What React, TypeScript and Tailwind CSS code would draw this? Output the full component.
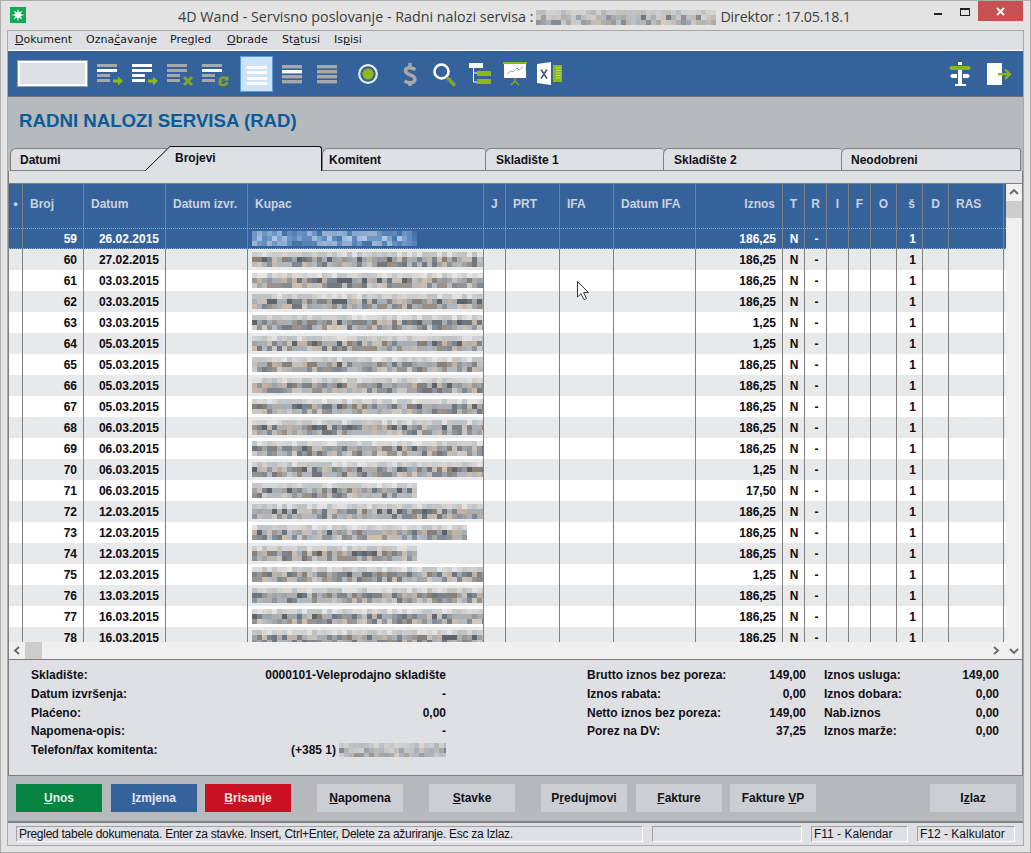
import type { ReactNode } from 'react';

const SANS = 'font-["Liberation_Sans",Arial,sans-serif]';
const UI = 'font-["DejaVu_Sans",sans-serif]';

const GREEN = '#8cb818';
const DIM = '#84a42a';
const GREY = '#a8a8a8';

// small seeded generator so the blurred blocks stay the same on every run
function rng(seed: number) {
  let s = seed * 9301 + 49297;
  return () => {
    s = (s * 9301 + 49297) % 233280;
    return s / 233280;
  };
}

const warm = ['#c4b2a2', '#7f858c', '#989898', '#5f646b', '#a6aeb6', '#c6c0ba', '#8a8076', '#6c7784', '#aeaeae', '#9ea4a8'];
const light = ['#b8babd', '#cccccc', '#b2b8bc', '#d4d0cc', '#c4c4c4', '#dedede'];
const blue = ['#6f97c4', '#9dbcdc', '#4a78ac', '#acc6e0', '#5f8abb', '#7ba2cc'];

function Mosaic({ seed, width, selected }: { seed: number; width: number; selected?: boolean }) {
  const r = rng(seed);
  const cols = Math.ceil(width / 5);
  const rects: ReactNode[] = [];
  for (let c = 0; c < cols; c++) {
    for (let l = 0; l < 3; l++) {
      const pal = selected ? blue : l === 0 ? light : warm;
      const fill = pal[Math.floor(r() * pal.length)];
      const op = l === 0 ? 0.8 : l === 1 ? 1 : 0.85;
      rects.push(<rect key={c + '-' + l} x={c * 5} y={l * 5} width={5} height={5} fill={fill} opacity={op} />);
    }
  }
  return (
    <svg width={width} height={15} className="block">
      {rects}
    </svg>
  );
}

function BlurBlock({ seed, width, height }: { seed: number; width: number; height: number }) {
  const r = rng(seed);
  const rects: ReactNode[] = [];
  for (let c = 0; c < Math.ceil(width / 5); c++) {
    for (let l = 0; l < Math.ceil(height / 5); l++) {
      const g = warm[Math.floor(r() * warm.length)];
      rects.push(<rect key={c + '-' + l} x={c * 5} y={l * 5} width={5} height={5} fill={g} opacity={l === 0 ? 0.35 : 0.4 + r() * 0.5} />);
    }
  }
  return (
    <svg width={width} height={height} className="block shrink-0">
      {rects}
    </svg>
  );
}

// toolbar icons use page coordinates in the viewBox (y 52..96)
function Ico({ x, w, ml, children }: { x: number; w: number; ml: string; children: ReactNode }) {
  return (
    <svg width={w} height={44} viewBox={`${x} 52 ${w} 44`} className={`block shrink-0 mt-[1px] ${ml}`}>
      {children}
    </svg>
  );
}

function Lines({ x, c }: { x: number; c: string[] }) {
  return (
    <>
      <rect x={x} y={64} width={20} height={3} fill={c[0]} />
      <rect x={x} y={69} width={20} height={3} fill={c[1]} />
      <rect x={x} y={74} width={13} height={3} fill={c[2]} />
      <rect x={x} y={79} width={13} height={3} fill={c[3]} />
    </>
  );
}

function Bars({ x, c }: { x: number; c: string[] }) {
  return (
    <>
      {c.map((col, i) => (
        <rect key={i} x={x} y={65 + i * 5} width={20} height={3.4} fill={col} />
      ))}
    </>
  );
}

function Toolbar() {
  const arrow = (x: number) => <path d={`M${x} 79.5h5v-3l5 4.5-5 4.5v-3h-5z`} fill={GREEN} />;
  return (
    <div className="flex h-[47px] items-start border-t border-b border-t-white border-b-[#6f7479] bg-[#36629b] pl-[10px] pr-[11px]">
      <div className="mt-[10px] h-[25px] w-[69px] shrink-0 border-2 border-white bg-[#dfe0e3] outline outline-1 outline-[#9aa0a8]" />
      <Ico x={97} w={26} ml="ml-[10px]">
        <Lines x={97} c={[GREY, '#ffffff', GREY, GREY]} />
        {arrow(113)}
      </Ico>
      <Ico x={132} w={26} ml="ml-[9px]">
        <Lines x={132} c={['#ffffff', '#ffffff', '#ffffff', '#ffffff']} />
        {arrow(148)}
      </Ico>
      <Ico x={167} w={26} ml="ml-[9px]">
        <Lines x={167} c={[GREY, GREY, GREY, GREY]} />
        <path d="M184 77l8 8M192 77l-8 8" stroke={DIM} strokeWidth={3} fill="none" />
      </Ico>
      <Ico x={202} w={27} ml="ml-[9px]">
        <Lines x={202} c={[GREY, '#ffffff', GREY, GREY]} />
        <path d="M219.5 80.5a4.5 4.5 0 0 1 7.5-1.8M227.5 82a4.5 4.5 0 0 1-7.5 1.8" stroke={DIM} strokeWidth={2.4} fill="none" />
        <path d="M228.5 75.5v5h-5zM218.5 85.5v-5h5z" fill={DIM} />
      </Ico>
      <div className="ml-[11px] mt-[5px] flex h-[36px] w-[33px] shrink-0 flex-col items-center gap-[2.4px] border border-[#5a9be0] bg-[#cde3fb] pt-[9px]">
        <div className="h-[3px] w-[20px] bg-white" />
        <div className="h-[3px] w-[20px] bg-white" />
        <div className="h-[3px] w-[20px] bg-white" />
        <div className="h-[3px] w-[20px] bg-white" />
      </div>
      <Ico x={282} w={20} ml="ml-[9px]">
        <Bars x={282} c={[GREY, '#ffffff', GREY, GREY]} />
      </Ico>
      <Ico x={317} w={20} ml="ml-[15px]">
        <Bars x={317} c={[GREY, GREY, GREY, GREY]} />
      </Ico>
      <Ico x={356} w={24} ml="ml-[19px]">
        <circle cx={368} cy={74} r={8.8} fill="none" stroke="#e8e8e8" strokeWidth={2.2} />
        <circle cx={368} cy={74} r={5.6} fill={GREEN} />
      </Ico>
      <Ico x={402} w={16} ml="ml-[22px]">
        <path
          d="M415.5 69.5Q410 66.5 406.5 68.5Q403.8 71.5 408 73.8L413 76.2Q416.5 79 413.8 81.8Q410 84 404.5 81"
          fill="none"
          stroke={GREY}
          strokeWidth={3.6}
        />
        <path d="M410 63v4M410 82v4" stroke={GREY} strokeWidth={3.4} />
      </Ico>
      <Ico x={430} w={27} ml="ml-[12px]">
        <circle cx={441.5} cy={71.5} r={7} fill="none" stroke="#ffffff" strokeWidth={2.6} />
        <path d="M448 78.5l6 6" stroke={DIM} strokeWidth={3.6} strokeLinecap="round" />
      </Ico>
      <Ico x={469} w={23} ml="ml-[12px]">
        <rect x={469} y={63} width={14} height={5} fill="#ffffff" />
        <path d="M473.5 68v14M473.5 73h4M473.5 82h4" stroke="#ffffff" strokeWidth={1} fill="none" />
        <rect x={477} y={71} width={14} height={5} fill={GREEN} />
        <rect x={477} y={79} width={14} height={5} fill={GREEN} />
      </Ico>
      <Ico x={503} w={25} ml="ml-[11px]">
        <rect x={503} y={62} width={24} height={2} fill={GREEN} />
        <rect x={504} y={64} width={22} height={14} fill="#ffffff" />
        <path d="M507 74l4-3 2 1 4-4 2 2 4-3" fill="none" stroke="#a0a0a0" strokeWidth={0.9} />
        <path d="M515 78v3l-4 4M515 81l4 4" stroke={DIM} strokeWidth={1.6} fill="none" />
      </Ico>
      <Ico x={537} w={26} ml="ml-[9px]">
        <path d="M537 64l14-2v23l-14-2z" fill="#ffffff" />
        <path d="M541 69.5l6 9M547 69.5l-6 9" stroke="#4f5f78" strokeWidth={1.7} />
        <rect x={553} y={65} width={9} height={17} fill={GREEN} />
        <path d="M556 68h5M556 70.500h5M556 73h5M556 75.500h5M556 78h5" stroke="#cfe08c" strokeWidth={0.8} />
      </Ico>
      <Ico x={949} w={23} ml="ml-auto">
        <rect x={958} y={62} width={4} height={3} fill="#ffffff" />
        <path d="M949 68l2-2h18l2 2-2 2h-18z" fill={GREEN} />
        <rect x={958} y={70} width={4} height={15} fill="#ffffff" />
        <path d="M950 76l2-2h5v4h-5zM970 76l-2-2h-5v4h5z" fill="#ffffff" />
        <rect x={955} y={84} width={11} height={2} fill="#ffffff" />
      </Ico>
      <Ico x={987} w={25} ml="ml-[15px]">
        <rect x={987} y={63} width={15} height={22} fill="#ffffff" />
        <rect x={998} y={73} width={11} height={2.4} fill={GREEN} />
        <path d="M1005 69.500l5 4.700-5 4.700" fill="none" stroke={GREEN} strokeWidth={2.2} />
      </Ico>
    </div>
  );
}

function Tab({ label, cls }: { label: string; cls: string }) {
  return (
    <div className={`mt-[2px] flex h-[23px] shrink-0 items-center rounded-tl-[6px] rounded-tr-[3px] border-t border-l border-b border-[#808080] bg-[#dfe0e3] text-xs font-bold text-[#101018] ${cls}`}>
      {label}
    </div>
  );
}

function Tabs() {
  return (
    <div className={`flex h-[25px] items-start pl-[2px] ${SANS}`}>
      <div className="mt-[2px] flex h-[23px] w-[135px] shrink-0 items-center rounded-tl-[6px] border-t border-l border-b border-[#808080] bg-[#dfe0e3] pl-[9px] text-xs font-bold text-[#101018]">
        Datumi
      </div>
      <svg width={25} height={25} viewBox="0 0 25 25" className="block shrink-0">
        <path d="M0 2.500H22L0 24z" fill="#dfe0e3" />
        <path d="M0 2.500H22" stroke="#808080" fill="none" />
        <path d="M0 25L25 0.500V25z" fill="#dfe0e3" />
        <path d="M0 25L25 0.500" stroke="#101010" fill="none" />
      </svg>
      <div className="flex h-[25px] w-[152px] shrink-0 items-start rounded-tr-[3px] border-t border-r border-[#101010] bg-[#dfe0e3] pl-[5px] pt-[4px] text-xs font-bold leading-[15px] text-[#101018]">
        Brojevi
      </div>
      <Tab label="Komitent" cls="w-[163px] pl-[6px]" />
      <Tab label="Skladište 1" cls="w-[178px] pl-[10px]" />
      <Tab label="Skladište 2" cls="w-[178px] pl-[10px]" />
      <Tab label="Neodobreni" cls="w-[180px] border-r pl-[9px]" />
    </div>
  );
}

const headers: { label: string; w: string; cls: string }[] = [
  { label: '•', w: 'w-[14px]', cls: 'justify-center' },
  { label: 'Broj', w: 'w-[61px]', cls: 'pl-[7px]' },
  { label: 'Datum', w: 'w-[82px]', cls: 'pl-[7px]' },
  { label: 'Datum izvr.', w: 'w-[82px]', cls: 'pl-[7px]' },
  { label: 'Kupac', w: 'w-[236px]', cls: 'pl-[7px]' },
  { label: 'J', w: 'w-[22px]', cls: 'pl-[7px]' },
  { label: 'PRT', w: 'w-[54px]', cls: 'pl-[7px]' },
  { label: 'IFA', w: 'w-[54px]', cls: 'pl-[7px]' },
  { label: 'Datum IFA', w: 'w-[82px]', cls: 'pl-[7px]' },
  { label: 'Iznos', w: 'w-[87px]', cls: 'justify-end pr-[7px]' },
  { label: 'T', w: 'w-[22px]', cls: 'justify-center' },
  { label: 'R', w: 'w-[22px]', cls: 'justify-center' },
  { label: 'I', w: 'w-[22px]', cls: 'justify-center' },
  { label: 'F', w: 'w-[22px]', cls: 'justify-center' },
  { label: 'O', w: 'w-[26px]', cls: 'justify-center' },
  { label: 'š', w: 'w-[26px]', cls: 'justify-center pl-[4px]' },
  { label: 'D', w: 'w-[26px]', cls: 'justify-center' },
  { label: 'RAS', w: 'w-[55px]', cls: 'pl-[7px]' },
];

const rows: [number, string, string, number][] = [
  [59, '26.02.2015', '186,25', 165],
  [60, '27.02.2015', '186,25', 231],
  [61, '03.03.2015', '186,25', 231],
  [62, '03.03.2015', '186,25', 231],
  [63, '03.03.2015', '1,25', 231],
  [64, '05.03.2015', '1,25', 231],
  [65, '05.03.2015', '186,25', 231],
  [66, '05.03.2015', '186,25', 231],
  [67, '05.03.2015', '186,25', 231],
  [68, '06.03.2015', '186,25', 231],
  [69, '06.03.2015', '186,25', 231],
  [70, '06.03.2015', '1,25', 231],
  [71, '06.03.2015', '17,50', 165],
  [72, '12.03.2015', '186,25', 231],
  [73, '12.03.2015', '186,25', 215],
  [74, '12.03.2015', '186,25', 165],
  [75, '12.03.2015', '1,25', 231],
  [76, '13.03.2015', '186,25', 231],
  [77, '16.03.2015', '186,25', 231],
  [78, '16.03.2015', '186,25', 231],
];

const line = 'h-full shrink-0 border-r border-[#808080]';

function Row({ no, date, amount, blur }: { no: number; date: string; amount: string; blur: number }) {
  const selected = no === 59;
  const bg = selected
    ? 'bg-[#36629b] text-white border-y border-dotted border-[#e0a050]'
    : no % 2 === 0
      ? 'bg-[#e8e9eb] text-[#0a0a10]'
      : 'bg-white text-[#0a0a10]';
  return (
    <div className={`flex h-[21px] items-center text-xs font-bold ${bg}`}>
      <div className={`${line} w-[14px]`} />
      <div className={`${line} flex w-[61px] items-center justify-end pr-[6px]`}>{no}</div>
      <div className={`${line} flex w-[82px] items-center justify-end pr-[6px]`}>{date}</div>
      <div className={`${line} w-[82px]`} />
      <div className={`${line} flex w-[236px] items-center pl-[4px]`}>
        <Mosaic seed={no * 7} width={blur} selected={selected} />
      </div>
      <div className={`${line} w-[22px]`} />
      <div className={`${line} w-[54px]`} />
      <div className={`${line} w-[54px]`} />
      <div className={`${line} w-[82px]`} />
      <div className={`${line} flex w-[87px] items-center justify-end pr-[6px]`}>{amount}</div>
      <div className={`${line} flex w-[22px] items-center justify-center pl-[1px]`}>N</div>
      <div className={`${line} flex w-[22px] items-center justify-center pl-[2px]`}>-</div>
      <div className={`${line} w-[22px]`} />
      <div className={`${line} w-[22px]`} />
      <div className={`${line} w-[26px]`} />
      <div className={`${line} flex w-[26px] items-center justify-center pl-[6px]`}>1</div>
      <div className={`${line} w-[26px]`} />
      <div className={`${line} w-[55px]`} />
    </div>
  );
}

function Chevron({ d }: { d: string }) {
  return (
    <svg width={16} height={17} viewBox="0 0 16 17" className="block shrink-0">
      <path d={d} fill="none" stroke="#666666" strokeWidth={1.8} />
    </svg>
  );
}

function Table() {
  return (
    <div className={`flex border-t border-[#808080] ${SANS}`}>
      <div className="w-[997px] shrink-0">
        <div className="flex h-[44px] bg-[#36629b] text-xs font-bold text-[#ccd2dc]">
          {headers.map((h) => (
            <div key={h.label} className={`flex shrink-0 items-center border-r border-[#808080] pb-[5px] ${h.w} ${h.cls}`}>
              {h.label}
            </div>
          ))}
        </div>
        <div className="relative h-[414px] overflow-hidden">
          {rows.map(([no, date, amount, blur]) => (
            <Row key={no} no={no} date={date} amount={amount} blur={blur} />
          ))}
          <svg width={14} height={20} viewBox="0 0 14 20" className="absolute left-[568px] top-[53px]">
            <path d="M.5.500V16L4 12.700 7 18.700 9.500 17.500 6.600 11.500H11.500Z" fill="#ffffff" stroke="#202020" strokeWidth={0.9} />
          </svg>
        </div>
        <div className="flex h-[17px] items-center bg-[#f0f0f0]">
          <Chevron d="M10 5l-4 3.500 4 3.500" />
          <div className="h-[17px] w-[17px] bg-[#cdcdcd]" />
          <div className="ml-auto">
            <Chevron d="M4 5l4 3.500-4 3.500" />
          </div>
        </div>
      </div>
      <div className="flex w-[16px] shrink-0 flex-col bg-[#f0f0f0]">
        <Chevron d="M4 10l4-4 4 4" />
        <div className="h-[17px] w-full bg-[#cdcdcd]" />
        <div className="mt-auto">
          <Chevron d="M4 7l4 4 4-4" />
        </div>
      </div>
    </div>
  );
}

const detailLeft: [string, ReactNode][] = [
  ['Skladište:', '0000101-Veleprodajno skladište'],
  ['Datum izvršenja:', '-'],
  ['Plaćeno:', '0,00'],
  ['Napomena-opis:', '-'],
  [
    'Telefon/fax komitenta:',
    <span key="tel" className="flex items-center gap-[3px]">
      (+385 1)
      <BlurBlock seed={33} width={107} height={14} />
    </span>,
  ],
];
const detailMid = [
  ['Brutto iznos bez poreza:', '149,00'],
  ['Iznos rabata:', '0,00'],
  ['Netto iznos bez poreza:', '149,00'],
  ['Porez na DV:', '37,25'],
];
const detailRight = [
  ['Iznos usluga:', '149,00'],
  ['Iznos dobara:', '0,00'],
  ['Nab.iznos', '0,00'],
  ['Iznos marže:', '0,00'],
];

function DetailCol({ items, w, ml }: { items: (string | ReactNode)[][]; w: string; ml: string }) {
  return (
    <div className={`shrink-0 ${w} ${ml}`}>
      {items.map((it, i) => (
        <div key={i} className="flex h-[18.700px] items-center justify-between">
          <span>{it[0]}</span>
          <span>{it[1]}</span>
        </div>
      ))}
    </div>
  );
}

function Details() {
  return (
    <div className={`flex h-[117px] border-t border-b border-[#808080] bg-[#dfe0e3] pl-[22px] pt-[6px] text-xs font-bold text-[#101018] ${SANS}`}>
      <DetailCol items={detailLeft} w="w-[415px]" ml="" />
      <DetailCol items={detailMid} w="w-[219px]" ml="ml-[141px]" />
      <DetailCol items={detailRight} w="w-[175px]" ml="ml-[18px]" />
    </div>
  );
}

function Btn({ ml, cls, children }: { ml: string; cls: string; children: ReactNode }) {
  return (
    <div className={`flex h-[28px] w-[86px] shrink-0 items-center justify-center text-xs font-bold ${ml} ${cls}`}>
      <span>{children}</span>
    </div>
  );
}

const plain = 'bg-[#cbced2] text-[#101018]';

function Buttons() {
  return (
    <div className={`flex h-[47px] border-b-2 border-[#808488] bg-[#b6babd] pl-[8px] pt-[8px] ${SANS}`}>
      <Btn ml="" cls="bg-[#048440] text-[#e6efe8]"><u>U</u>nos</Btn>
      <Btn ml="ml-[9px]" cls="bg-[#36629b] text-[#e4e8f0]"><u>I</u>zmjena</Btn>
      <Btn ml="ml-[8px]" cls="bg-[#c91022] text-[#f4e4e4]"><u>B</u>risanje</Btn>
      <Btn ml="ml-[26px]" cls={plain}><u>N</u>apomena</Btn>
      <Btn ml="ml-[26px]" cls={plain}><u>S</u>tavke</Btn>
      <Btn ml="ml-[26px]" cls={plain}>P<u>r</u>edujmovi</Btn>
      <Btn ml="ml-[9px]" cls={plain}><u>F</u>akture</Btn>
      <Btn ml="ml-[8px]" cls={plain}>Fakture <u>V</u>P</Btn>
      <Btn ml="ml-[114px]" cls={plain}>I<u>z</u>laz</Btn>
    </div>
  );
}

function Field({ w, ml, children }: { w: string; ml: string; children?: ReactNode }) {
  return (
    <div className={`flex h-[16px] shrink-0 items-center overflow-hidden whitespace-nowrap border-t border-l border-r border-b border-t-[#a0a0a0] border-l-[#a0a0a0] border-r-white border-b-white pl-[2px] text-xs text-[#101018] ${SANS} ${w} ${ml}`}>
      {children}
    </div>
  );
}

export default function App() {
  return (
    <div className={`flex h-[853px] w-[1031px] flex-col overflow-hidden border border-[#adadad] bg-[#e3e3e3] ${UI}`}>
      {/* title bar */}
      <div className="flex h-[29px] shrink-0 items-start">
        <div className="ml-[9px] mt-[6px] flex h-[16px] w-[16px] items-center justify-center bg-[#0fa958]">
          <svg width={14} height={14} viewBox="0 0 14 14">
            <path d="M7 .5l.9 4.100 3.700-2.200-2.200 3.700 4.100.9-4.100.9 2.200 3.700-3.700-2.200L7 13.500l-.9-4.100-3.700 2.200 2.200-3.700L.5 7l4.100-.9-2.200-3.700 3.700 2.200z" fill="#ffffff" />
          </svg>
        </div>
        <div className={`ml-[152px] mt-[6px] flex h-[20px] w-[672px] items-center whitespace-nowrap text-[14.300px] text-[#3c3c3c] font-["Open_Sans",sans-serif]`}>
          <span>4D Wand - Servisno poslovanje - Radni nalozi servisa :</span>
          <span className="ml-[3px] mr-[4px]">
            <BlurBlock seed={12} width={180} height={15} />
          </span>
          <span className="tracking-[-0.2px]">Direktor : 17.05.18.1</span>
        </div>
        <div className="ml-[84px] mt-[12px] h-[2px] w-[8px] bg-[#202020]" />
        <div className="ml-[18px] mt-[7px] h-[8px] w-[10px] border border-t-2 border-[#202020]" />
        <div className="ml-[8px] flex h-[20px] w-[45px] items-center justify-center bg-[#c75050]">
          <svg width={9} height={9} viewBox="0 0 9 9">
            <path d="M1 1l7 7M8 1l-7 7" stroke="#ffffff" strokeWidth={1.8} />
          </svg>
        </div>
      </div>

      {/* client area */}
      <div className="mx-[6px] flex flex-col border-t border-l border-r border-b border-[#a8a8a8] bg-[#dfe0e3]">
        <div className="flex h-[19px] items-center pl-[7px] text-[11px] text-[#181820]">
          <span className="w-[71px] shrink-0"><u>D</u>okument</span>
          <span className="w-[84px] shrink-0">Ozna<u>č</u>avanje</span>
          <span className="w-[57px] shrink-0">Pre<u>g</u>led</span>
          <span className="w-[55px] shrink-0"><u>O</u>brade</span>
          <span className="w-[52px] shrink-0">St<u>a</u>tusi</span>
          <span className="shrink-0">Is<u>p</u>isi</span>
        </div>
        <Toolbar />
        <div className="bg-[#b6babd]">
          <div className={`flex h-[49px] items-start pl-[11px] pt-[12px] text-[18.670px] font-bold leading-[24px] text-[#0b5a9a] ${SANS}`}>
            RADNI NALOZI SERVISA (RAD)
          </div>
          <Tabs />
          <div className="border-l border-r border-[#808080] bg-[#dfe0e3]">
            <div className="h-[12px]" />
            <Table />
            <Details />
          </div>
          <Buttons />
        </div>
        <div className="flex h-[22px] items-start bg-[#dfe0e3] pl-[8px] pt-[3px]">
          <Field w="w-[627px]" ml="">
            <span className="tracking-[-0.27px]">
              Pregled tabele dokumenata. Enter za stavke. Insert, Ctrl+Enter, Delete za ažuriranje. Esc za Izlaz.
            </span>
          </Field>
          <Field w="w-[150px]" ml="ml-[9px]" />
          <Field w="w-[97px]" ml="ml-[9px]">F11 - Kalendar</Field>
          <Field w="w-[98px]" ml="ml-[9px]">F12 - Kalkulator</Field>
        </div>
      </div>
    </div>
  );
}
